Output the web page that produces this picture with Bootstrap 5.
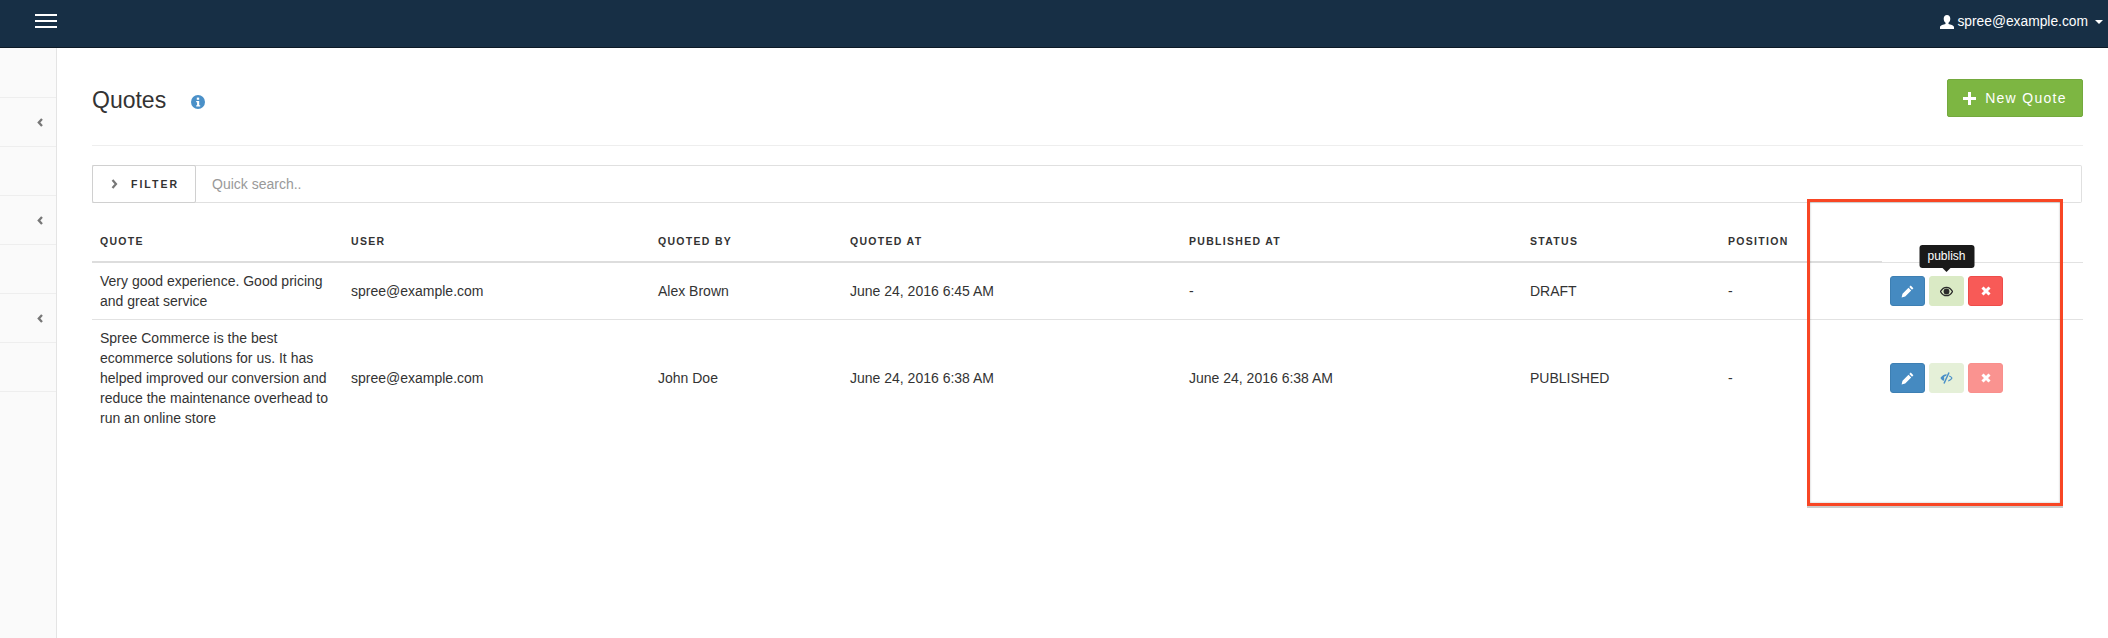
<!DOCTYPE html>
<html lang="en">
<head>
<meta charset="utf-8">
<title>Quotes</title>
<link href="https://cdn.jsdelivr.net/npm/bootstrap@5.3.0/dist/css/bootstrap.min.css" rel="stylesheet">
<style>
html,body{height:100%;}
body{font-family:"Liberation Sans",Arial,sans-serif;font-size:14px;line-height:20px;color:#333;background:#fff;overflow:hidden;position:relative;}
.top-bar{height:48px;background:#172f45;border-bottom:1px solid #0d1a26;padding:0 5px 5px 35px;}
.burger{width:22px;display:flex;flex-direction:column;gap:4px;}
.burger span{display:block;height:2px;background:#fff;}
.user-link{color:#fff;font-size:13.8px;gap:3px;margin-top:2px;}
.caret-down{width:0;height:0;border-left:4px solid transparent;border-right:4px solid transparent;border-top:4px solid #fff;margin-left:4px;}
.shell{height:590px;}
.side-rail{width:57px;flex:none;background:#fafafa;border-right:1px solid #e4e4e4;}
.rail-item{height:49px;border-bottom:1px solid #eee;padding-right:13px;box-sizing:border-box;}
.rail-item:first-child{height:50px;}
.main-area{padding:0 25px 0 35px;min-width:0;}
.page-head{height:98px;border-bottom:1px solid #eee;padding-top:31px;}
.title-wrap{margin-top:2px;}
.page-title{font-size:23px;font-weight:400;line-height:38px;color:#333;margin:0;}
.info-dot{margin-left:25px;margin-top:4px;}
.btn-new{background:#7db642;border:1px solid #74a93e;color:#fff;height:38px;width:136px;font-size:14px;letter-spacing:1.3px;border-radius:2px;padding:0;gap:9px;}
.btn-new:hover{background:#7db642;color:#fff;}
.filter-bar{height:38px;margin-top:19px;border:1px solid #e0e0e0;border-left:0;border-radius:0 2px 2px 0;margin-right:1px;}
.filter-tab{width:104px;height:38px;margin-top:-1px;margin-bottom:-1px;border:1px solid #d0d0d0;border-radius:2px;flex:none;font-size:10.5px;font-weight:700;letter-spacing:2px;color:#333;padding-left:18px;gap:13px;}
.quick{font-size:14px;color:#999;padding-left:16px;}
.quote-grid{table-layout:fixed;width:100%;margin:0;}
.quote-grid th{font-size:10.5px;letter-spacing:1.3px;font-weight:700;color:#333;height:60px;padding:0 8px 12px;vertical-align:bottom;border-bottom:0;text-transform:uppercase;line-height:20px;}
.quote-grid td{padding:8px;vertical-align:middle;border-bottom:1px solid #e2e2e2;font-size:14px;color:#333;line-height:20px;}
.quote-grid tr:last-child td{border-bottom:0;}
.quote-grid thead tr{background:linear-gradient(#ddd,#ddd) 0 100%/1790px 2px no-repeat,linear-gradient(#e2e2e2,#e2e2e2) 0 100%/100% 1px no-repeat;}
.quote-grid td.action-cell{padding:0 0 0 7px;}
.act-btn{width:35px;height:30px;border-radius:3px;padding:0;flex:none;border:1px solid transparent;}
.act-edit{background:#458ac1;border-color:#3d7fb3;}
.act-pub{background:#daeac5;border-color:#daeac5;position:relative;}
.act-del{background:#f85a57;border-color:#ee4c49;}
.act-pub-off{background:#e5f0d8;border-color:#e5f0d8;}
.act-del-off{background:#fa9390;border-color:#f98f8c;}
.tip-bubble{position:absolute;left:50%;top:-32px;transform:translateX(-50%);background:#1a1a1a;color:#fff;font-size:12px;line-height:23px;height:23px;width:55px;text-align:center;border-radius:3px;}
.tip-bubble::after{content:"";position:absolute;left:50%;bottom:-4px;margin-left:-4px;border-left:4px solid transparent;border-right:4px solid transparent;border-top:4px solid #1a1a1a;}
.mark-box{position:absolute;left:1807px;top:199px;width:256px;height:307px;border:3px solid #f84624;box-shadow:inset 0 0 2px rgba(0,0,0,.3),0 2px 0 #ccc;pointer-events:none;}
</style>
</head>
<body>
<nav class="top-bar d-flex align-items-center justify-content-between">
  <div class="burger"><span></span><span></span><span></span></div>
  <div class="user-link d-flex align-items-center">
    <svg width="14" height="14" viewBox="0 0 14 14" fill="#fff"><path d="M7 0c2 0 3.300 1.500 3.300 3.800 0 1.800-.8 3.200-1.800 4v1.200c1.800.6 5.500 1.300 5.500 3.200V14H0v-1.800C0 10.300 3.700 9.600 5.500 9V7.800c-1-.8-1.800-2.200-1.800-4C3.700 1.500 5 0 7 0z"/></svg>
    <span>spree@example.com</span><span class="caret-down"></span>
  </div>
</nav>
<div class="shell d-flex">
  <aside class="side-rail">
    <div class="rail-item"></div>
    <div class="rail-item d-flex align-items-center justify-content-end"><svg width="6" height="9" viewBox="0 0 6 9"><path d="M5 1 1.800 4.500 5 8" fill="none" stroke="#777" stroke-width="2.300"/></svg></div>
    <div class="rail-item"></div>
    <div class="rail-item d-flex align-items-center justify-content-end"><svg width="6" height="9" viewBox="0 0 6 9"><path d="M5 1 1.800 4.500 5 8" fill="none" stroke="#777" stroke-width="2.300"/></svg></div>
    <div class="rail-item"></div>
    <div class="rail-item d-flex align-items-center justify-content-end"><svg width="6" height="9" viewBox="0 0 6 9"><path d="M5 1 1.800 4.500 5 8" fill="none" stroke="#777" stroke-width="2.300"/></svg></div>
    <div class="rail-item"></div>
  </aside>
  <main class="main-area flex-grow-1">
    <div class="page-head d-flex justify-content-between align-items-start">
      <div class="title-wrap d-flex align-items-center">
        <h1 class="page-title">Quotes</h1>
        <svg class="info-dot" width="14" height="14" viewBox="0 0 14 14"><circle cx="7" cy="7" r="7" fill="#4a90c8"/><rect x="5.800" y="2.600" width="2.400" height="2.200" fill="#fff"/><path d="M5.200 6h3v4.200h1v1.300H5.200v-1.300h.9V7.300h-.9z" fill="#fff"/></svg>
      </div>
      <a class="btn btn-new d-inline-flex align-items-center justify-content-center" href="#">
        <svg width="13" height="13" viewBox="0 0 13 13"><path d="M5 0h3v5h5v3H8v5H5V8H0V5h5z" fill="#fff"/></svg>New Quote</a>
    </div>
    <div class="filter-bar d-flex align-items-center">
      <div class="filter-tab d-flex align-items-center">
        <svg width="7" height="10" viewBox="0 0 7 10"><path d="M1.500 1 5 5 1.500 9" fill="none" stroke="#777" stroke-width="2.200"/></svg><span>FILTER</span>
      </div>
      <div class="quick">Quick search..</div>
    </div>
    <table class="quote-grid table-borderless">
      <colgroup><col style="width:251px"><col style="width:307px"><col style="width:192px"><col style="width:339px"><col style="width:341px"><col style="width:198px"><col style="width:163px"><col></colgroup>
      <thead><tr><th>Quote</th><th>User</th><th>Quoted By</th><th>Quoted At</th><th>Published At</th><th>Status</th><th>Position</th><th></th></tr></thead>
      <tbody>
        <tr>
          <td>Very good experience. Good pricing and great service</td>
          <td>spree@example.com</td><td>Alex Brown</td><td>June 24, 2016 6:45 AM</td><td>-</td><td>DRAFT</td><td>-</td>
          <td class="action-cell"><div class="d-flex gap-1">
            <span class="act-btn act-edit d-flex align-items-center justify-content-center"><svg width="13" height="13" viewBox="0 0 13 13"><path d="M9.700.6 12.400 3.300 11 4.700 8.300 2zM7.500 2.800l2.700 2.700-6 6L.6 12.400l.9-3.600z" fill="#fff"/></svg></span>
            <span class="act-btn act-pub d-flex align-items-center justify-content-center"><span class="tip-bubble">publish</span><svg width="13" height="11" viewBox="0 0 13 11"><path d="M.5 5.500C2 2.800 4 1.300 6.500 1.300s4.500 1.500 6 4.200c-1.500 2.700-3.500 4.200-6 4.200S2 8.200.5 5.500z" fill="none" stroke="#2b2b2b" stroke-width="1.300"/><circle cx="6.500" cy="5.500" r="2.900" fill="#2b2b2b"/></svg></span>
            <span class="act-btn act-del d-flex align-items-center justify-content-center"><svg width="10" height="10" viewBox="0 0 10 10"><path d="M1.500 1.500l7 7M8.500 1.500l-7 7" stroke="#fff" stroke-width="3"/></svg></span>
          </div></td>
        </tr>
        <tr>
          <td>Spree Commerce is the best ecommerce solutions for us. It has helped improved our conversion and reduce the maintenance overhead to run an online store</td>
          <td>spree@example.com</td><td>John Doe</td><td>June 24, 2016 6:38 AM</td><td>June 24, 2016 6:38 AM</td><td>PUBLISHED</td><td>-</td>
          <td class="action-cell"><div class="d-flex gap-1">
            <span class="act-btn act-edit d-flex align-items-center justify-content-center"><svg width="13" height="13" viewBox="0 0 13 13"><path d="M9.700.6 12.400 3.300 11 4.700 8.300 2zM7.500 2.800l2.700 2.700-6 6L.6 12.400l.9-3.600z" fill="#fff"/></svg></span>
            <span class="act-btn act-pub-off d-flex align-items-center justify-content-center"><svg width="13" height="12" viewBox="0 0 13 12"><path d="M9 .5 4 11.500" stroke="#4a90c8" stroke-width="1.500"/><path d="M6.800 2.300C4 2.300 1.900 3.800.4 6c.8 1.300 1.800 2.400 3.100 3.100l.9-2.100C3.800 6.300 3.900 5 4.900 4.300c.8-.5 1.200-.4 1.200-.4z" fill="#4a90c8"/><path d="M9.500 3.600c1.300.6 2.300 1.300 3.100 2.400-.9 1.600-2.500 3-4.700 3.500l.6-1.400c1.300-.4 2.200-1.100 2.800-2.100-.6-.7-1.500-1.200-2.400-1.500z" fill="#4a90c8"/></svg></span>
            <span class="act-btn act-del-off d-flex align-items-center justify-content-center"><svg width="10" height="10" viewBox="0 0 10 10"><path d="M1.500 1.500l7 7M8.500 1.500l-7 7" stroke="#fff" stroke-width="3"/></svg></span>
          </div></td>
        </tr>
      </tbody>
    </table>
  </main>
</div>
<div class="mark-box"></div>
<script src="https://cdn.jsdelivr.net/npm/bootstrap@5.3.0/dist/js/bootstrap.bundle.min.js"></script>
</body>
</html>
